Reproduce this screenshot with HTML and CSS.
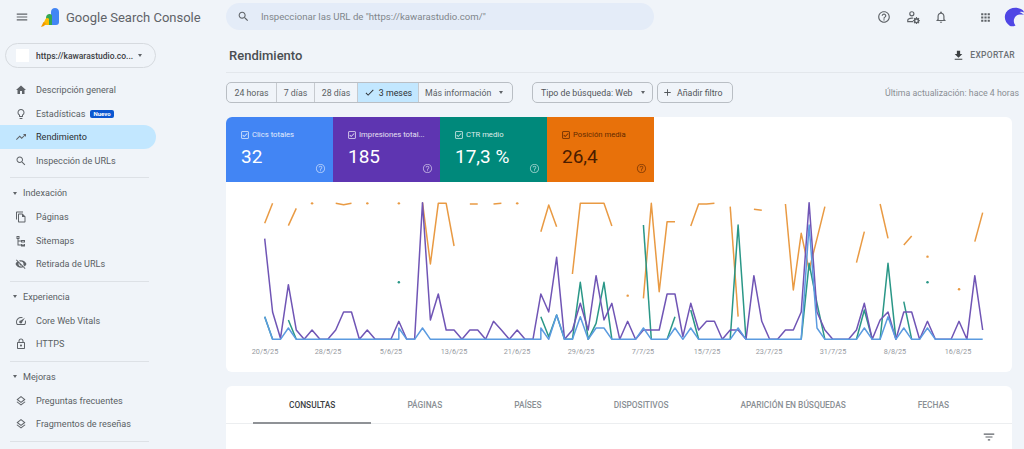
FILE: index.html
```html
<!DOCTYPE html>
<html lang="es">
<head>
<meta charset="utf-8">
<title>Rendimiento - Google Search Console</title>
<link rel="stylesheet" href="styles.css">
</head>
<body>
<svg class="defs" aria-hidden="true">
  <symbol id="i-menu" viewBox="0 0 24 24"><path d="M3 18h18v-2H3v2zm0-5h18v-2H3v2zm0-7v2h18V6H3z"/></symbol>
  <symbol id="i-search" viewBox="0 0 24 24"><path d="M15.5 14h-.79l-.28-.27C15.41 12.59 16 11.11 16 9.5 16 5.91 13.09 3 9.5 3S3 5.91 3 9.5 5.91 16 9.5 16c1.61 0 3.09-.59 4.23-1.57l.27.28v.79l5 4.99L20.49 19l-4.99-5zm-6 0C7.01 14 5 11.99 5 9.5S7.01 5 9.5 5 14 7.01 14 9.5 11.99 14 9.5 14z"/></symbol>
  <symbol id="i-home" viewBox="0 0 24 24"><path d="M10 20v-6h4v6h5v-8h3L12 3 2 12h3v8z"/></symbol>
  <symbol id="i-bulb" viewBox="0 0 24 24"><path d="M9 21c0 .55.45 1 1 1h4c.55 0 1-.45 1-1v-1H9v1zm3-19C8.14 2 5 5.14 5 9c0 2.38 1.19 4.47 3 5.74V17c0 .55.45 1 1 1h6c.55 0 1-.45 1-1v-2.26c1.81-1.27 3-3.36 3-5.74 0-3.86-3.14-7-7-7zm2.85 11.1l-.85.6V16h-4v-2.3l-.85-.6C7.8 12.16 7 10.63 7 9c0-2.76 2.24-5 5-5s5 2.24 5 5c0 1.63-.8 3.16-2.15 4.1z"/></symbol>
  <symbol id="i-trend" viewBox="0 0 24 24"><path d="M16 6l2.29 2.29-4.88 4.88-4-4L2 16.59 3.41 18l6-6 4 4 6.3-6.29L22 12V6z"/></symbol>
  <symbol id="i-pages" viewBox="0 0 24 24"><path d="M16 1H4c-1.1 0-2 .9-2 2v14h2V3h12V1zm-1 4H8c-1.1 0-1.99.9-1.99 2L6 21c0 1.1.89 2 1.99 2H19c1.1 0 2-.9 2-2V11l-6-6zM8 21V7h6v5h5v9H8z"/></symbol>
  <symbol id="i-sitemap" viewBox="0 0 24 24"><path d="M3 2h6v6H7v3h5v-1h8v5h-8v-2H7v6h5v-1h8v5h-8v-2H5V8H3V2zm2 2v2h2V4H5zm9 8v1h4v-1h-4zm0 7v1h4v-1h-4z"/></symbol>
  <symbol id="i-eyeoff" viewBox="0 0 24 24"><path d="M12 7c2.76 0 5 2.24 5 5 0 .65-.13 1.26-.36 1.83l2.92 2.92c1.51-1.26 2.7-2.89 3.43-4.75-1.73-4.39-6-7.5-11-7.5-1.4 0-2.74.25-3.98.7l2.16 2.16C10.74 7.13 11.35 7 12 7zM2 4.27l2.28 2.28.46.46C3.08 8.3 1.78 10.02 1 12c1.73 4.39 6 7.5 11 7.5 1.55 0 3.03-.3 4.38-.84l.42.42L19.73 22 21 20.73 3.27 3 2 4.27zM7.53 9.8l1.55 1.55c-.05.21-.08.43-.08.65 0 1.66 1.34 3 3 3 .22 0 .44-.03.65-.08l1.55 1.55c-.67.33-1.41.53-2.2.53-2.76 0-5-2.24-5-5 0-.79.2-1.53.53-2.2z"/></symbol>
  <symbol id="i-gauge" viewBox="0 0 24 24"><path d="M12 4a10 10 0 0 0-10 10c0 2 .6 3.900 1.600 5.500l.6.500h15.600l.6-.500A10 10 0 0 0 22 14c0-1.300-.25-2.500-.7-3.700l-1.600 1.600c.2.700.3 1.400.3 2.100 0 1.500-.4 2.900-1.100 4H5.100A8 8 0 0 1 12 6c.7 0 1.400.1 2.100.3l1.600-1.600A10 10 0 0 0 12 4zm8 1.500l-8.400 5.600a3 3 0 1 0 2.800 2.800L20 5.500z"/></symbol>
  <symbol id="i-lock" viewBox="0 0 24 24"><path d="M18 8h-1V6c0-2.760-2.240-5-5-5S7 3.240 7 6v2H6c-1.100 0-2 .9-2 2v10c0 1.100.9 2 2 2h12c1.100 0 2-.9 2-2V10c0-1.100-.9-2-2-2zM9 6c0-1.660 1.340-3 3-3s3 1.340 3 3v2H9V6zm9 14H6V10h12v10zm-6-3c1.100 0 2-.9 2-2s-.9-2-2-2-2 .9-2 2 .9 2 2 2z"/></symbol>
  <symbol id="i-layers" viewBox="0 0 24 24"><path d="M11.990 18.540l-7.370-5.730L3 14.070l9 7 9-7-1.630-1.270zM12 16l7.360-5.730L21 9l-9-7-9 7 1.630 1.270L12 16zm0-11.470L17.740 9 12 13.470 6.260 9 12 4.530z"/></symbol>
  <symbol id="i-help" viewBox="0 0 24 24"><path d="M11 18h2v-2h-2v2zm1-16C6.480 2 2 6.480 2 12s4.480 10 10 10 10-4.480 10-10S17.520 2 12 2zm0 18c-4.410 0-8-3.590-8-8s3.590-8 8-8 8 3.590 8 8-3.590 8-8 8zm0-14c-2.210 0-4 1.790-4 4h2c0-1.100.9-2 2-2s2 .9 2 2c0 2-3 1.750-3 5h2c0-2.250 3-2.500 3-5 0-2.210-1.790-4-4-4z"/></symbol>
  <symbol id="i-people" viewBox="0 0 24 24"><path d="M10 2a4.500 4.500 0 1 0 0 9 4.500 4.500 0 0 0 0-9zm0 2a2.500 2.500 0 1 1 0 5 2.500 2.500 0 0 1 0-5zM10 13c-3.800 0-8 1.800-8 4.500V21h10v-2H4v-1.500c0-1 3-2.500 6-2.500.6 0 1 0 1.500.1l.9-1.800c-.8-.2-1.600-.3-2.400-.3zM17.200 12l-.4 1.600-1.200.5-1.400-.8-1.100 1.100.8 1.400-.5 1.200-1.600.4v1.600l1.600.4.500 1.200-.8 1.400 1.100 1.100 1.400-.8 1.200.5.4 1.600h1.600l.4-1.600 1.200-.5 1.400.8 1.100-1.100-.8-1.400.5-1.200 1.300-.4v-1.600l-1.300-.4-.5-1.200.8-1.400-1.100-1.100-1.400.8-1.200-.5-.4-1.600h-1.600zm.8 4.600a2 2 0 1 1 0 4 2 2 0 0 1 0-4z"/></symbol>
  <symbol id="i-bell" viewBox="0 0 24 24"><path d="M12 22c1.100 0 2-.9 2-2h-4c0 1.100.9 2 2 2zm6-6v-5c0-3.070-1.630-5.640-4.500-6.320V4c0-.83-.67-1.500-1.500-1.500s-1.500.67-1.500 1.500v.68C7.640 5.360 6 7.920 6 11v5l-2 2v1h16v-1l-2-2zm-2 1H8v-6c0-2.480 1.510-4.500 4-4.500s4 2.020 4 4.500v6z"/></symbol>
  <symbol id="i-apps" viewBox="0 0 24 24"><path d="M4 8h4V4H4v4zm6 12h4v-4h-4v4zm-6 0h4v-4H4v4zm0-6h4v-4H4v4zm6 0h4v-4h-4v4zm6-10v4h4V4h-4zm-6 4h4V4h-4v4zm6 6h4v-4h-4v4zm0 6h4v-4h-4v4z"/></symbol>
  <symbol id="i-down" viewBox="0 0 24 24"><path d="M19 9h-4V3H9v6H5l7 7 7-7zM5 18v2h14v-2H5z"/></symbol>
  <symbol id="i-box" viewBox="0 0 24 24"><path d="M19 3H5c-1.100 0-2 .9-2 2v14c0 1.100.9 2 2 2h14c1.100 0 2-.9 2-2V5c0-1.100-.9-2-2-2zm0 16H5V5h14v14zM17.990 9l-1.410-1.420-6.590 6.590-2.580-2.570-1.420 1.410 4 3.990z"/></symbol>
  <symbol id="i-check" viewBox="0 0 24 24"><path d="M9 16.170L4.830 12l-1.420 1.410L9 19 21 7l-1.410-1.410z"/></symbol>
  <symbol id="i-add" viewBox="0 0 24 24"><path d="M19 13h-6v6h-2v-6H5v-2h6V5h2v6h6v2z"/></symbol>
  <symbol id="i-filter" viewBox="0 0 24 24"><path d="M10 18h4v-2h-4v2zM3 6v2h18V6H3zm3 7h12v-2H6v2z"/></symbol>
</svg>

<header class="topbar">
  <div class="brand">
    <svg class="ico ico-menu"><use href="#i-menu"/></svg>
    <svg class="logo" viewBox="0 0 19 19" aria-hidden="true">
      <path fill="#4285f4" d="M10 17V4c0-2.500 1.800-4 4-4s4 1.500 4 4v10c0 2-1 3-3 3z"/>
      <path fill="#34a853" d="M5 17v-7c0-2.500 1.500-4 3.500-4 1 0 2 .5 2.500 1.500V17z"/>
      <path fill="#fbbc04" d="M2.500 15l2-4c1-1.500 3-1.200 3.500 0V17H3z"/>
      <path fill="#f29900" d="M0 19l2.500-5 2.500 1.500L3 18z"/>
    </svg>
    <span class="brand-name">Google Search Console</span>
  </div>
  <div class="search">
    <svg class="ico ico-search"><use href="#i-search"/></svg>
    <span>Inspeccionar las URL de "https://kawarastudio.com/"</span>
  </div>
  <div class="top-actions">
    <svg class="ico ico-top"><use href="#i-help"/></svg>
    <svg class="ico ico-top"><use href="#i-people"/></svg>
    <svg class="ico ico-top"><use href="#i-bell"/></svg>
    <svg class="ico ico-apps"><use href="#i-apps"/></svg>
    <svg class="avatar" viewBox="0 0 20 20" aria-hidden="true">
      <path fill="#4f46e5" d="M6 19C1 16-.5 10 2 5.500 5 .5 13-1 18.500 3c.8.6 1.300 1.500 1.500 2.500-1.500-.8-3-.8-4.500-.2 1.500.3 3.300 1.200 4.500 2.700-3-.8-6.500-.5-8.500 1.500C9.500 12 9 15.500 11.500 18.500 9.500 19.500 7.500 19.500 6 19z"/>
    </svg>
  </div>
</header>

<div class="layout">
  <nav class="sidebar">
    <div class="property">
      <span class="prop-fav"></span>
      <span class="prop-name">https://kawarastudio.co...</span>
      <span class="caret"></span>
    </div>
    <ul class="nav-group">
      <li class="nav-item"><svg class="ico"><use href="#i-home"/></svg>Descripción general</li>
      <li class="nav-item"><svg class="ico"><use href="#i-bulb"/></svg>Estadísticas<span class="badge">Nuevo</span></li>
      <li class="nav-item active"><svg class="ico"><use href="#i-trend"/></svg>Rendimiento</li>
      <li class="nav-item"><svg class="ico"><use href="#i-search"/></svg>Inspección de URLs</li>
    </ul>
    <ul class="nav-group">
      <li class="nav-head"><span class="caret"></span>Indexación</li>
      <li class="nav-item"><svg class="ico"><use href="#i-pages"/></svg>Páginas</li>
      <li class="nav-item"><svg class="ico"><use href="#i-sitemap"/></svg>Sitemaps</li>
      <li class="nav-item"><svg class="ico"><use href="#i-eyeoff"/></svg>Retirada de URLs</li>
    </ul>
    <ul class="nav-group">
      <li class="nav-head"><span class="caret"></span>Experiencia</li>
      <li class="nav-item"><svg class="ico"><use href="#i-gauge"/></svg>Core Web Vitals</li>
      <li class="nav-item"><svg class="ico"><use href="#i-lock"/></svg>HTTPS</li>
    </ul>
    <ul class="nav-group">
      <li class="nav-head"><span class="caret"></span>Mejoras</li>
      <li class="nav-item"><svg class="ico"><use href="#i-layers"/></svg>Preguntas frecuentes</li>
      <li class="nav-item"><svg class="ico"><use href="#i-layers"/></svg>Fragmentos de reseñas</li>
    </ul>
  </nav>

  <main class="main">
    <div class="page-head">
      <h1>Rendimiento</h1>
      <span class="export"><svg class="ico"><use href="#i-down"/></svg>EXPORTAR</span>
    </div>

    <div class="filters">
      <div class="seg">
        <span class="seg-item seg-a">24 horas</span>
        <span class="seg-item seg-b">7 días</span>
        <span class="seg-item seg-c">28 días</span>
        <span class="seg-item seg-d on"><svg class="ico"><use href="#i-check"/></svg>3 meses</span>
        <span class="seg-item seg-e">Más información<span class="caret"></span></span>
      </div>
      <span class="chip chip-type">Tipo de búsqueda: Web<span class="caret"></span></span>
      <span class="chip chip-add"><svg class="ico"><use href="#i-add"/></svg>Añadir filtro</span>
      <span class="updated">Última actualización: hace 4 horas</span>
    </div>

    <section class="card chart-card">
      <div class="tiles">
        <div class="tile t-blue">
          <div class="tile-label"><svg class="ico"><use href="#i-box"/></svg>Clics totales</div>
          <div class="tile-value">32</div>
          <svg class="ico tile-help"><use href="#i-help"/></svg>
        </div>
        <div class="tile t-purple">
          <div class="tile-label"><svg class="ico"><use href="#i-box"/></svg>Impresiones total...</div>
          <div class="tile-value">185</div>
          <svg class="ico tile-help"><use href="#i-help"/></svg>
        </div>
        <div class="tile t-teal">
          <div class="tile-label"><svg class="ico"><use href="#i-box"/></svg>CTR medio</div>
          <div class="tile-value">17,3 %</div>
          <svg class="ico tile-help"><use href="#i-help"/></svg>
        </div>
        <div class="tile t-orange">
          <div class="tile-label"><svg class="ico"><use href="#i-box"/></svg>Posición media</div>
          <div class="tile-value">26,4</div>
          <svg class="ico tile-help"><use href="#i-help"/></svg>
        </div>
      </div>
      <svg class="chart" viewBox="0 0 786 190" aria-label="Gráfico de rendimiento">
        <g transform="translate(38.7 8) scale(7.89 .3333)">
          <g class="s s-orange">
            <polyline points="0,100 1,40"/><polyline points="3,107 4,55"/>
            <polyline points="9,40 10,44 11,40"/>
            <polyline points="20,38 21,222 22,40 23,40 24,168"/>
            <polyline points="26,42 27,42"/><polyline points="29,42 30,40"/>
            <polyline points="35,125 36,45 37,110"/>
            <polyline points="39,252 40,40 41,40 42,40 43,40 44,108"/>
            <polyline points="48,325 49,40 50,305 51,95 52,95"/>
            <polyline points="54,108 55,42 56,42 57,40"/>
            <polyline points="59,50 60,380"/><polyline points="62,58 63,61"/>
            <polyline points="66,42 67,300 68,130 69,240 70,146 71,50"/>
            <polyline points="75,218 76,125"/><polyline points="78,42 79,145"/>
            <polyline points="81,165 82,138"/><polyline points="90,155 91,68"/>
            <polyline class="dot" points="6,40 6.01,40"/><polyline class="dot" points="13,40 13.01,40"/>
            <polyline class="dot" points="17,40 17.01,40"/><polyline class="dot" points="32,40 32.01,40"/>
            <polyline class="dot" points="46,317 46.01,317"/><polyline class="dot" points="84,200 84.01,200"/>
            <polyline class="dot" points="88,298 88.01,298"/>
          </g>
          <g class="s s-teal">
            <polyline points="0,380 1,448"/><polyline points="3,390 4,448"/>
            <polyline points="35,380 36,440 37,375 38,448 39,448 40,277 41,448 42,400 43,277 44,448"/>
            <polyline points="48,105 49,448"/><polyline points="51,448 52,380"/>
            <polyline points="54,360 55,448"/><polyline points="59,448 60,105 61,448"/>
            <polyline points="68,448 69,220 70,340 71,448"/>
            <polyline points="75,448 76,360 77,448"/><polyline points="78,448 79,220 80,448"/>
            <polyline points="81,335 82,448"/>
            <polyline class="dot" points="17,277 17.01,277"/><polyline class="dot" points="84,277 84.01,277"/>
          </g>
          <g class="s s-purple">
            <polyline points="0,146 1,366 2,445 3,284 4,420 5,448 6,420 7,448 8,448 9,420 10,366 11,366 12,448 13,420 14,448 15,448 16,448 17,394 18,448 19,448 20,38 21,390 22,312 23,420 24,420 25,448 26,420 27,420 28,448 29,394 30,420 31,448 32,420 33,448 34,448 35,312 36,366 37,202 38,448 39,420 40,340 41,420 42,257 43,390 44,340 45,448 46,394 47,448 48,420 49,420 50,420 51,312 52,312 53,440 54,340 55,420 56,394 57,394 58,448 59,420 60,420 61,448 62,257 63,394 64,448 65,448 66,420 67,420 68,366 69,38 70,366 71,420 72,448 73,448 74,448 75,420 76,340 77,448 78,390 79,366 80,448 81,366 82,366 83,448 84,394 85,448 86,448 87,448 88,394 89,448 90,257 91,420"/>
          </g>
          <g class="s s-blue">
            <polyline points="0,380 1,448 2,448 3,414 4,448 17,448 17,414 18,448 19,448 20,414 21,448 35,448 35,414 36,448 37,375 38,448 39,448 40,380 41,448 42,414 43,414 44,448 47,448 48,414 49,448 51,448 52,414 53,448 54,414 55,448 59,448 60,414 61,448 68,448 69,105 70,414 71,448 75,448 76,414 77,448 78,448 79,380 80,448 81,414 82,448 83,448 84,414 85,448 91,448"/>
          </g>
        </g>
        <g class="ticks">
          <text x="39" y="172">20/5/25</text>
          <text x="102" y="172">28/5/25</text>
          <text x="165" y="172">5/6/25</text>
          <text x="228" y="172">13/6/25</text>
          <text x="291" y="172">21/6/25</text>
          <text x="355" y="172">29/6/25</text>
          <text x="417" y="172">7/7/25</text>
          <text x="481" y="172">15/7/25</text>
          <text x="543" y="172">23/7/25</text>
          <text x="607" y="172">31/7/25</text>
          <text x="669" y="172">8/8/25</text>
          <text x="732" y="172">16/8/25</text>
        </g>
      </svg>
    </section>

    <section class="card table-card">
      <div class="tabs">
        <span class="tab on">CONSULTAS</span>
        <span class="tab">PÁGINAS</span>
        <span class="tab">PAÍSES</span>
        <span class="tab">DISPOSITIVOS</span>
        <span class="tab">APARICIÓN EN BÚSQUEDAS</span>
        <span class="tab">FECHAS</span>
      </div>
      <div class="table-tools"><svg class="ico"><use href="#i-filter"/></svg></div>
    </section>
  </main>
</div>
</body>
</html>
```

FILE: styles.css
```css
* { box-sizing: border-box; }
html, body { margin: 0; height: 449px; overflow: hidden; }
body {
  background: #f0f4f9;
  color: #444746;
  font-family: Roboto, "Liberation Sans", sans-serif;
  font-size: 9.1px;
}
.defs { display: none; }
.ico { width: 12px; height: 12px; fill: currentColor; flex: none; display: block; }

/* top bar */
.topbar { display: flex; align-items: center; height: 34px; }
.brand { width: 226px; display: flex; align-items: center; flex: none; padding-left: 15px; }
.ico-menu { width: 14px; height: 14px; color: #5f6368; }
.logo { width: 19px; height: 19px; margin-left: 12px; }
.brand-name { margin-left: 6px; padding-top: 1px; font-size: 13px; color: #5f6368; white-space: nowrap; }
.search {
  width: 428px; height: 27px; margin-top: -1px; border-radius: 14px; background: #e4ecf8; color: #80868b;
  display: flex; align-items: center; gap: 11px; padding-left: 11px; font-size: 9.6px;
}
.ico-search { width: 13px; height: 13px; color: #5f6368; }
.top-actions { margin-left: auto; display: flex; align-items: center; color: #5f6368; }
.ico-top { width: 14px; height: 14px; margin-right: 14.5px; }
.ico-apps { width: 13px; height: 13px; margin: 0 12.5px 0 16px; }
.avatar { width: 20px; height: 20px; }

/* layout */
.layout { display: flex; height: 415px; }
.sidebar { width: 226px; flex: none; }
.property {
  width: 151px; height: 25px; margin: 9px 0 10px 5px; border: 1px solid #d6dadf; border-radius: 13px;
  display: flex; align-items: center; padding-left: 10px; font-size: 8.5px; font-weight: 500; color: #3c4043;
}
.prop-fav { width: 13px; height: 13px; background: #fff; margin-right: 7px; flex: none; }
.prop-name { white-space: nowrap; }
.caret {
  display: inline-block; width: 0; height: 0; flex: none;
  border-left: 2.5px solid transparent; border-right: 2.5px solid transparent; border-top: 3px solid #5f6368;
}
.property .caret { margin-left: 5px; }

.nav-group {
  list-style: none; margin: 0 0 3px 10px; padding: 0 0 4.5px; width: 139px;
  border-bottom: 1px solid #dde1e6;
}
.nav-item {
  height: 23.7px; width: 156px; margin-left: -10px; display: flex; align-items: center; padding-left: 15px;
  color: #5a5f64; border-radius: 0 12px 12px 0;
}
.nav-item .ico { margin-right: 9px; color: #5f6368; }
.nav-item.active { background: #c2e7ff; color: #2b2f33; }
.nav-head { height: 24px; width: 156px; margin-left: -10px; display: flex; align-items: center; padding-left: 13px; color: #5a5f64; }
.nav-head .caret { margin-right: 6px; }
.badge {
  margin-left: 5px; padding: 0 3px; height: 8px; line-height: 8px; border-radius: 2px; background: #0b57d0; color: #fff;
  font-size: 6px; font-weight: 700;
}

/* main */
.main { flex: 1; min-width: 0; }
.page-head {
  height: 39px; display: flex; align-items: center; justify-content: space-between;
  border-bottom: 1px solid #e3e7ec; padding: 4px 9px 0 3px;
}
h1 { margin: 0; font-size: 13px; font-weight: 500; color: #4a4e52; }
.export { display: flex; align-items: center; gap: 5px; font-size: 8.5px; font-weight: 500; color: #6b7075; letter-spacing: .3px; }
.export .ico { width: 13px; height: 13px; color: #3c4043; }

.filters { display: flex; align-items: center; height: 21px; margin-top: 9px; font-size: 8.8px; }
.seg { display: flex; height: 21px; width: 287px; border: 1px solid #b9bec4; border-radius: 5px; overflow: hidden; }
.seg-item { display: flex; align-items: center; justify-content: center; border-left: 1px solid #c6cacf; color: #5a5f64; }
.seg-item:first-child { border-left: 0; }
.seg-a { width: 49px; } .seg-b { width: 38px; } .seg-c { width: 43px; } .seg-d { width: 61px; } .seg-e { width: 94px; justify-content: flex-start; padding-left: 6px; }
.seg-d.on { background: #c2e7ff; color: #2b2f33; gap: 4px; }
.seg-d .ico { width: 11px; height: 11px; }
.seg-e .caret { margin-left: 8px; }
.chip {
  height: 21px; border: 1px solid #b9bec4; border-radius: 5px; display: flex; align-items: center; color: #50555a;
}
.chip-type { width: 121px; margin-left: 19px; padding-left: 8px; }
.chip-type .caret { margin-left: 8px; }
.chip-add { width: 76px; margin-left: 4px; padding-left: 4px; gap: 4px; }
.chip-add .ico { width: 11px; height: 11px; }
.updated { margin-left: auto; padding-right: 5px; color: #8a8f94; }

/* cards */
.card { background: #fff; width: 786px; border-radius: 6px; }
.chart-card { margin-top: 14px; height: 255px; }
.tiles { display: flex; width: 428px; height: 65px; }
.tile { position: relative; width: 107px; padding: 12px 0 0 14px; color: #fff; }
.t-blue { background: #4285f4; border-radius: 6px 0 0 0; }
.t-purple { background: #5e35b1; }
.t-teal { background: #00897b; }
.t-orange { background: #e8710a; color: #4a1c00; }
.tile-label { display: flex; align-items: center; gap: 2px; font-size: 7.7px; white-space: nowrap; opacity: .85; height: 11px; }
.tile-label .ico { width: 10px; height: 10px; }
.tile-value { font-size: 19px; line-height: 24px; margin-top: 5px; padding-left: 1px; }
.tile-help { position: absolute; right: 7px; bottom: 8px; width: 11px; height: 11px; opacity: .55; }

.chart { display: block; width: 786px; height: 190px; }
.s polyline { fill: none; stroke-width: 1.5; vector-effect: non-scaling-stroke; stroke-linejoin: round; }
.s polyline.dot { stroke-width: 2.4; stroke-linecap: round; }
.s-orange polyline { stroke: #e99a43; }
.s-teal polyline { stroke: #2a9787; }
.s-purple polyline { stroke: #7055b5; }
.s-blue polyline { stroke: #5b9be0; }
.ticks text { font-family: Roboto, "Liberation Sans", sans-serif; font-size: 7.3px; fill: #969a9f; text-anchor: middle; }

.table-card { margin-top: 14px; height: 80px; border-radius: 6px 6px 0 0; }
.tabs { display: flex; height: 38px; padding-left: 27px; border-bottom: 1px solid #eceef0; }
.tab {
  padding: 1px 36px 0; display: flex; align-items: center; font-size: 8.35px; font-weight: 500; color: #8a8f94; white-space: nowrap;
  border-bottom: 2px solid transparent; margin-bottom: -1px;
}
.tab.on { color: #3c4043; border-bottom-color: #8f9296; }
.table-tools { display: flex; justify-content: flex-end; padding: 6px 16px 0 0; }
.table-tools .ico { width: 14px; height: 14px; color: #5f6368; }
```
